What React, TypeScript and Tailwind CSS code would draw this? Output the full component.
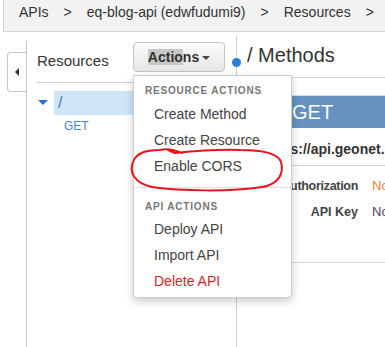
import React from "react";

export default function App() {
  return (
    <div className="relative w-[385px] h-[347px] overflow-hidden bg-white font-['Liberation_Sans',Arial,sans-serif] text-[#333]">
      {/* Breadcrumb bar */}
      <div className="ml-[3px] h-[32px] bg-[#f2f2f2] border-l border-b border-[#d4d4d4] flex items-center pl-[15px] gap-[15px] text-[14px] text-[#333] whitespace-nowrap pb-[6px]">
        <span>APIs</span>
        <span>&gt;</span>
        <span>eq-blog-api (edwfudumi9)</span>
        <span>&gt;</span>
        <span>Resources</span>
        <span>&gt;</span>
      </div>

      {/* Body */}
      <div className="flex h-[315px]">
        {/* Collapse sidebar */}
        <div className="w-[27px] shrink-0 pt-[9px]">
          <div className="h-full border-r border-[#c8c8c8] pt-[11px]">
            <div className="ml-[7px] w-[19px] h-[40px] border border-r-0 border-[#c8c8c8] rounded-l-[4px] flex items-center justify-center">
              <div className="w-0 h-0 border-y-[4px] border-y-transparent border-r-[4px] border-r-[#333]" />
            </div>
          </div>
        </div>

        {/* Resources panel */}
        <div className="w-[209px] shrink-0 pl-[10px] pt-[10px]">
          <div className="flex items-center pb-[9px] border-b border-[#cfcfcf] mr-[6px]">
            <span className="w-[96px] pt-[8px] text-[15px] text-[#333]">Resources</span>
            <div className="w-[92px] h-[30px] rounded-[4px] border border-[#c4c4c4] bg-gradient-to-b from-[#fbfbfb] to-[#e6e6e6] flex items-center justify-center">
              <span className="text-[14px] font-bold text-[#333]">
                <span className="bg-[#c8c8c8]">Actio</span>ns
              </span>
              <span className="ml-[3px] mt-[2px] w-0 h-0 border-x-[4px] border-x-transparent border-t-[4px] border-t-[#444]" />
            </div>
          </div>
          <div className="mt-[8px] flex h-[24px]">
            <div className="w-[17px] flex items-center">
              <div className="ml-[1px] w-0 h-0 border-x-[5px] border-x-transparent border-t-[5px] border-t-[#2f6fc0]" />
            </div>
            <div className="flex-1 bg-[#cfe5f8] flex items-center pl-[4px] text-[16px] text-[#3b7bc8]">/</div>
          </div>
          <div className="h-[22px] flex items-center pl-[27px] text-[12px] text-[#4a86c8]">GET</div>
        </div>

        {/* Methods panel */}
        <div className="flex-1 pt-[4px] min-w-0">
          <div className="relative h-full border-l border-[#cfcfcf]">
            <div className="absolute left-[-5px] top-[22px] w-[9px] h-[9px] rounded-full bg-[#2a7fd4]" />
            <div className="h-[42px] border-b border-[#d4d4d4] flex items-center pl-[10px] pb-[3px] text-[20px] text-[#333] whitespace-nowrap">
              / Methods
            </div>
            <div className="mt-[17px] ml-[10px] border-t border-[#dcdcdc] h-[33px] bg-[#6592c0] flex items-center pl-[45px] text-[20px] text-white">
              GET
            </div>
            <div className="h-[38px] border-b border-[#d4d4d4] flex items-center pt-[5px] pl-[27px] text-[14px] font-bold text-[#333] whitespace-nowrap">
              https://api.geonet.nz
            </div>
            <div className="pt-[7px] pb-[37px] pl-[10px] border-b border-[#d4d4d4]">
              <div className="h-[26px] flex items-center whitespace-nowrap">
                <span className="w-[111px] shrink-0 text-right text-[12.5px] font-bold text-[#444] tracking-[-0.3px]">Authorization</span>
                <span className="ml-[14px] shrink-0 text-[13px] text-[#e8822f]">No</span>
              </div>
              <div className="h-[26px] flex items-center whitespace-nowrap">
                <span className="w-[111px] shrink-0 text-right text-[12.5px] font-bold text-[#444]">API Key</span>
                <span className="ml-[14px] shrink-0 text-[13px] text-[#4d4258]">No</span>
              </div>
            </div>
          </div>
        </div>
      </div>

      {/* Actions dropdown menu */}
      <div className="absolute left-[133px] top-[75px] w-[159px] h-[223px] bg-white border border-[#cfcfcf] rounded-b-[4px] shadow-[0_3px_8px_rgba(0,0,0,0.22)] pt-[4px] whitespace-nowrap">
        <div className="h-[21px] flex items-center pl-[11px] text-[10px] font-bold tracking-[0.8px] text-[#777]">RESOURCE ACTIONS</div>
        <div className="h-[26px] flex items-center pl-[20px] text-[14px] text-[#444]">Create Method</div>
        <div className="h-[26px] flex items-center pl-[20px] text-[14px] text-[#444]">Create Resource</div>
        <div className="h-[26px] flex items-center pl-[20px] text-[14px] text-[#444]">Enable CORS</div>
        <div className="mt-[8px] border-t border-[#dedede]" />
        <div className="mt-[8px] h-[20px] flex items-center pl-[11px] text-[10px] font-bold tracking-[0.8px] text-[#777]">API ACTIONS</div>
        <div className="h-[26px] flex items-center pl-[20px] text-[14px] text-[#444]">Deploy API</div>
        <div className="h-[26px] flex items-center pl-[20px] text-[14px] text-[#444]">Import API</div>
        <div className="h-[26px] flex items-center pl-[20px] text-[14px] text-[#d4242b]">Delete API</div>
      </div>

      {/* Hand-drawn red annotation */}
      <svg className="absolute left-0 top-0 pointer-events-none" width="385" height="347" viewBox="0 0 385 347">
        <path
          d="M182 153 C175 150 168 148 160 150 C145 150 136 153 133 162 C129 172 134 183 152 187 C180 191 230 192 262 187 C280 184 284 172 281 162 C278 153 262 150 240 150 C215 149 195 151 175 153 L168 150"
          fill="none"
          stroke="#e8141b"
          strokeWidth="2"
          strokeLinecap="round"
          strokeLinejoin="round"
        />
      </svg>
    </div>
  );
}
